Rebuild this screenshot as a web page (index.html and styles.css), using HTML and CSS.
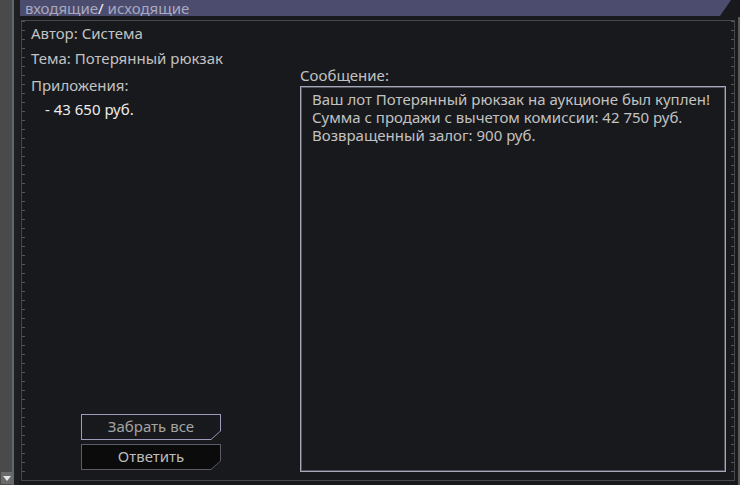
FILE: index.html
```html
<!DOCTYPE html>
<html lang="ru">
<head>
  <meta charset="UTF-8">
  <meta name="viewport" content="width=device-width, initial-scale=1.0">
  <title>Почта</title>
  <link rel="stylesheet" href="styles.css">
</head>
<body>
  <div class="window">
    <div class="rail">
      <div class="rail-arrow"></div>
    </div>
    <div class="gutter"></div>
    <div class="pane">
      <div class="tabs">
        <span class="tab">входящие</span><span class="slash">/</span> <span class="tab">исходящие</span>
      </div>
      <div class="frame">
        <div class="meta">
          <div class="meta-line">Автор: Система</div>
          <div class="meta-line">Тема: Потерянный рюкзак</div>
          <div class="meta-line meta-gap">Приложения:</div>
          <div class="attach">- 43 650 руб.</div>
          <div class="actions">
            <button class="btn btn-take"><span class="btn-face">Забрать все</span></button>
            <button class="btn btn-reply"><span class="btn-face">Ответить</span></button>
          </div>
        </div>
        <div class="message">
          <div class="message-label">Сообщение:</div>
          <div class="message-box">
            Ваш лот Потерянный рюкзак на аукционе был куплен!<br>
            Сумма с продажи с вычетом комиссии: 42 750 руб.<br>
            Возвращенный залог: 900 руб.
          </div>
        </div>
      </div>
    </div>
    <div class="edge"></div>
  </div>
</body>
</html>
```

FILE: styles.css
```css
html, body {
  margin: 0;
  height: 100%;
}
body {
  font-family: "Noto Sans", "Open Sans", sans-serif;
  font-size: 15px;
  background-color: #18191c;
  color: #c2c2c2;
  overflow: hidden;
}
.window {
  display: flex;
  height: 485px;
}
.rail {
  width: 14px;
  background-color: #4a4a4a;
  border-right: 2px solid #62666e;
  display: flex;
  flex-direction: column;
  justify-content: flex-end;
  padding-bottom: 1px;
  box-sizing: border-box;
}
.rail-arrow {
  width: 11px;
  height: 12px;
  margin-left: 1px;
  background-color: #6a6a6a;
  display: flex;
  align-items: center;
  justify-content: center;
}
.rail-arrow::after {
  content: "";
  border-left: 4px solid transparent;
  border-right: 4px solid transparent;
  border-top: 5px solid #e6e6e6;
}
.gutter {
  width: 6px;
  background-color: #1e1f21;
}
.pane {
  flex: 1;
  display: flex;
  flex-direction: column;
  min-width: 0;
}
.edge {
  width: 2px;
  margin-top: 17px;
  background-color: #5a5a5a;
}
.tabs {
  height: 16px;
  line-height: 16px;
  padding-left: 5px;
  background-color: #4b4c6e;
  color: #a9a9c0;
  clip-path: polygon(0 0, 711px 0, 700px 100%, 0 100%);
  white-space: nowrap;
  overflow: hidden;
}
.slash {
  color: #f4f4f4;
}
.frame {
  flex: 1;
  display: flex;
  margin: 4px 3px 4px 1px;
  border: 1px solid #46474a;
  background-image:
    repeating-linear-gradient(to bottom, #55565a 0 1px, transparent 1px 9px),
    repeating-linear-gradient(to bottom, #55565a 0 1px, transparent 1px 9px);
  background-size: 3px 100%, 3px 100%;
  background-position: left top, right top;
  background-repeat: no-repeat;
}
.meta {
  width: 278px;
  padding: 0 0 0 9px;
  box-sizing: border-box;
  display: flex;
  flex-direction: column;
  line-height: 25px;
}
.meta-gap {
  margin-top: 2px;
}
.attach {
  padding-left: 14px;
  line-height: 22px;
  color: #ececec;
}
.actions {
  margin-top: auto;
  margin-left: 50px;
  margin-bottom: 10px;
  display: flex;
  flex-direction: column;
  gap: 4px;
}
.btn {
  width: 140px;
  height: 26px;
  padding: 1px;
  border: none;
  box-sizing: border-box;
  font: inherit;
  clip-path: polygon(0 0, 100% 0, 100% 17px, calc(100% - 10px) 100%, 0 100%);
  cursor: pointer;
}
.btn-face {
  display: block;
  height: 100%;
  line-height: 23px;
  text-align: center;
  clip-path: polygon(0 0, 100% 0, 100% 16px, calc(100% - 9px) 100%, 0 100%);
}
.btn-take {
  background-color: #9c9cbc;
}
.btn-take .btn-face {
  background-color: #18191c;
  color: #a4a4a4;
}
.btn-reply {
  background-color: #5c5c68;
}
.btn-reply .btn-face {
  background-color: #0b0b0c;
  color: #bcbcbc;
}
.message {
  flex: 1;
  display: flex;
  flex-direction: column;
  margin: 0 8px 8px 0;
}
.message-label {
  margin-top: 43px;
  line-height: 22px;
}
.message-box {
  flex: 1;
  border: 1px solid #a6a8ba;
  box-shadow: inset 0 0 0 1px #50525c;
  padding: 3px 11px;
  line-height: 18px;
}
```
